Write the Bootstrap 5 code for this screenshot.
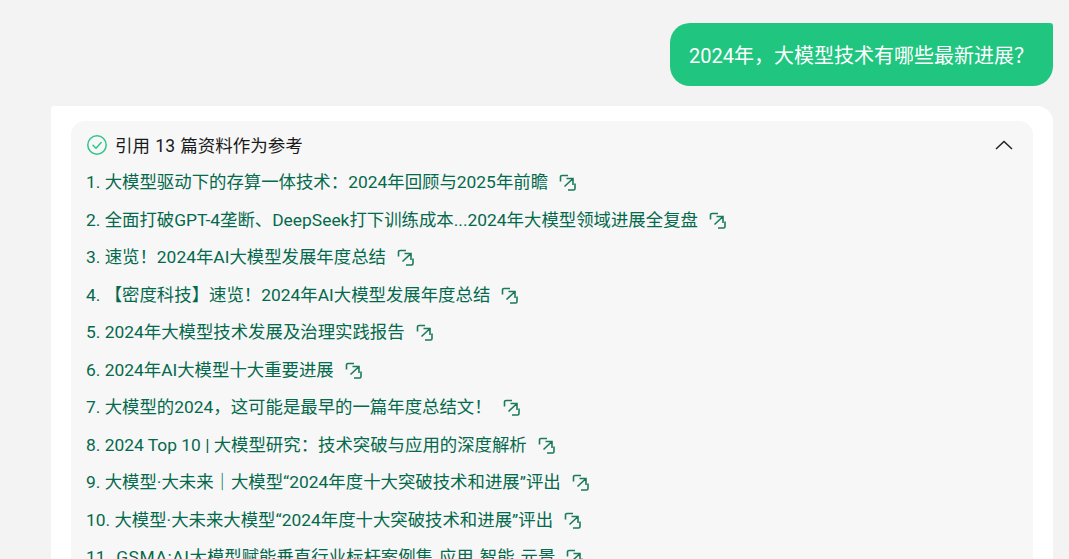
<!DOCTYPE html>
<html lang="zh"><head><meta charset="utf-8"><title>Chat</title>
<link href="https://cdn.jsdelivr.net/npm/bootstrap@5.3.0/dist/css/bootstrap.min.css" rel="stylesheet">
<style>
html,body{height:100%;overflow:hidden}
body{background:#f3f3f3;font-family:Roboto,"Noto Sans CJK SC",sans-serif;color:#1a1a1a}
.chat-wrap{padding:23px 16px 0 51px}
.user-bubble{background:#20c67f;color:#fff;font-size:20px;line-height:27px;padding:20px 19px 16px;border-radius:20px 3px 20px 20px}
.answer-panel{background:#fff;border-radius:3px 16px 0 0;margin-top:20px;padding:15px 20px 0}
.refs-box{background:#f7f7f7;border-radius:14px 14px 0 0;padding:7px 16px 0 15px;font-size:17.4px}
.refs-head{height:36px;color:#1a1a1a;font-size:17.5px;word-spacing:1px}
.refs-list{list-style:none;margin:0;padding:0}
.refs-list li{height:37.5px;line-height:37.5px;white-space:nowrap}
.refs-list a{color:#05694c;text-decoration:none}
.ext-icon{margin-left:11px;vertical-align:-4px;width:18px;height:18px;fill:none;stroke:#1b7a5c;stroke-width:1.6}
.check-icon{margin:-2px 8px 0 1px}
.row-wide{word-spacing:1.7px}
.latin-wide{letter-spacing:.6px}
</style></head><body>
<svg class="d-none"><symbol id="ext" viewBox="0 0 18 18"><path d="M9 1.500H3A1.500 1.500 0 0 0 1.500 3V7.500M16 9.500V14.500A1.500 1.500 0 0 1 14.500 16H9M5.500 12.500L13.500 5M7.500 4.500H14V11"/></symbol></svg>
<div class="chat-wrap">
<div class="d-flex justify-content-end"><div class="user-bubble">2024年，大模型技术有哪些最新进展？</div></div>
<div class="answer-panel">
<div class="refs-box">
<div class="refs-head d-flex align-items-center justify-content-between">
<div class="d-flex align-items-center"><svg class="check-icon" width="20" height="20" viewBox="0 0 20 20" fill="none" stroke="#2fc58a" stroke-width="1.5"><circle cx="10" cy="10" r="9.2"/><path d="M6 10.2l3 3 5.2-5.600" stroke-linecap="round" stroke-linejoin="round"/></svg><span>引用 13 篇资料作为参考</span></div>
<svg class="me-1" width="18" height="12" viewBox="0 0 18 12" fill="none" stroke="#222" stroke-width="1.5"><path d="M1 9L9 1.500l8 7.500"/></svg>
</div>
<ol class="refs-list">
<li><a href="#">1. 大模型驱动下的存算一体技术：2024年回顾与2025年前瞻<svg class="ext-icon"><use href="#ext"/></svg></a></li>
<li><a href="#">2. 全面打破GPT-4垄断、DeepSeek打下训练成本...2024年大模型领域进展全复盘<svg class="ext-icon"><use href="#ext"/></svg></a></li>
<li><a href="#">3. 速览！2024年AI大模型发展年度总结<svg class="ext-icon"><use href="#ext"/></svg></a></li>
<li><a href="#">4. 【密度科技】速览！2024年AI大模型发展年度总结<svg class="ext-icon"><use href="#ext"/></svg></a></li>
<li><a href="#">5. 2024年大模型技术发展及治理实践报告<svg class="ext-icon"><use href="#ext"/></svg></a></li>
<li><a href="#">6. 2024年AI大模型十大重要进展<svg class="ext-icon"><use href="#ext"/></svg></a></li>
<li><a href="#">7. 大模型的2024，这可能是最早的一篇年度总结文！<svg class="ext-icon"><use href="#ext"/></svg></a></li>
<li><a href="#">8. 2024 Top 10 | 大模型研究：技术突破与应用的深度解析<svg class="ext-icon"><use href="#ext"/></svg></a></li>
<li><a href="#">9. 大模型·大未来｜大模型“2024年度十大突破技术和进展”评出<svg class="ext-icon"><use href="#ext"/></svg></a></li>
<li><a href="#">10. 大模型·大未来大模型“2024年度十大突破技术和进展”评出<svg class="ext-icon"><use href="#ext"/></svg></a></li>
<li class="row-wide"><a href="#">11. <span class="latin-wide">GSMA:AI</span>大模型赋能垂直行业标杆案例集 应用 智能 元景<svg class="ext-icon"><use href="#ext"/></svg></a></li>
</ol>
</div></div></div>
<script src="https://cdn.jsdelivr.net/npm/bootstrap@5.3.0/dist/js/bootstrap.bundle.min.js"></script>
</body></html>
